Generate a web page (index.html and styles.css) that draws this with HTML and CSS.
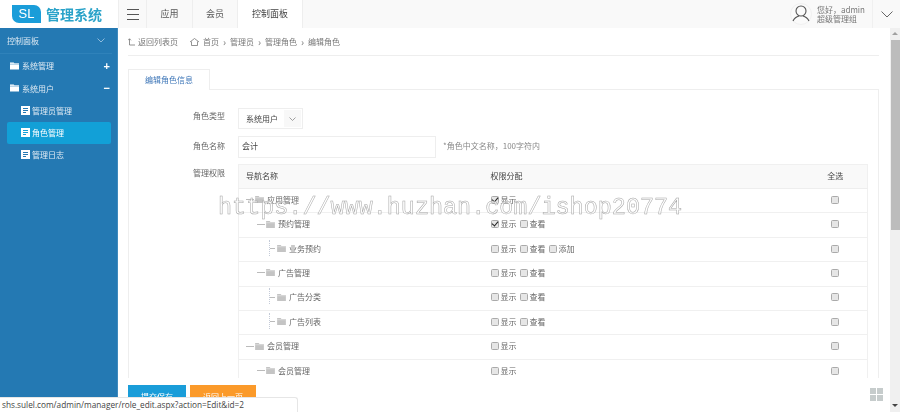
FILE: index.html
```html
<!DOCTYPE html>
<html lang="zh-CN">
<head>
<meta charset="utf-8">
<title>编辑角色</title>
<link rel="stylesheet" href="styles.css">
</head>
<body>
<svg class="defs" width="0" height="0" aria-hidden="true">
  <symbol id="folder" viewBox="0 0 10 8"><path d="M0 0h4l1 1h5v7H0z" fill="#c4c4c4"/><path d="M0 2h10" stroke="#eee" stroke-width=".6"/></symbol>
  <symbol id="wfolder" viewBox="0 0 10 8"><path d="M0 0h4l1 1h5v7H0z" fill="#fff"/><path d="M0 2h10" stroke="#2479b3" stroke-width=".5"/></symbol>
  <symbol id="doc" viewBox="0 0 9 9"><path d="M0 0h9v9H0z" fill="#fff"/><path d="M2 2.500h5M2 4.500h5M2 6.500h3" stroke="currentColor" stroke-width="1"/></symbol>
</svg>
<div class="app">
  <header class="top">
    <div class="logo">
      <span class="logo-badge">SL</span>
      <span class="logo-text">管理系统</span>
    </div>
    <button class="burger" aria-label="菜单"><svg width="12" height="11" viewBox="0 0 12 11"><path d="M0 .5h12M0 5.500h12M0 10.500h12" stroke="#555" stroke-width="1"/></svg></button>
    <nav class="topnav">
      <a class="topnav-item t1">应用</a>
      <a class="topnav-item t2">会员</a>
      <a class="topnav-item t3 is-active">控制面板</a>
    </nav>
    <div class="user">
      <svg class="avatar" width="22" height="22" viewBox="0 0 22 22"><circle cx="11" cy="11" r="10.500" fill="#fafafa" stroke="#f0f0f0"/><circle cx="11" cy="8" r="5" fill="none" stroke="#555" stroke-width="1.100"/><path d="M3 18c1.500-3 4-4.500 6-5M19 18c-1.500-3-4-4.500-6-5" fill="none" stroke="#555" stroke-width="1.100"/></svg>
      <div class="user-text"><div>您好，admin</div><div>超级管理组</div></div>
    </div>
    <div class="user-arrow"><svg width="12" height="7" viewBox="0 0 12 7"><path d="M.5.500 6 6l5.500-5.500" fill="none" stroke="#666" stroke-width="1"/></svg></div>
  </header>
  <aside class="side">
    <div class="side-head"><span>控制面板</span><svg width="8" height="5" viewBox="0 0 8 5"><path d="M.5.500 4 4 7.500.5" fill="none" stroke="#8dbbdc" stroke-width="1"/></svg></div>
    <ul class="side-list">
      <li class="side-row"><svg width="9" height="8"><use href="#wfolder"/></svg><span>系统管理</span><b class="sign">+</b></li>
      <li class="side-row"><svg width="9" height="8"><use href="#wfolder"/></svg><span>系统用户</span><b class="sign">−</b></li>
      <li class="side-sub"><svg width="9" height="9"><use href="#doc"/></svg><span>管理员管理</span></li>
      <li class="side-sub is-active"><svg width="9" height="9"><use href="#doc"/></svg><span>角色管理</span></li>
      <li class="side-sub"><svg width="9" height="9"><use href="#doc"/></svg><span>管理日志</span></li>
    </ul>
  </aside>
  <main class="main">
    <div class="crumbs">
      <svg width="7" height="8" viewBox="0 0 7 8"><path d="M1.500 7V.8M0 2.300 1.500.8 3 2.300M1.500 7H7" fill="none" stroke="#777" stroke-width=".8"/></svg>
      <span class="back">返回列表页</span>
      <svg class="home" width="9" height="8" viewBox="0 0 9 8"><path d="M0 4 4.500.5 9 4M1.500 3.500V7.500h6v-4" fill="none" stroke="#777" stroke-width=".8"/></svg>
      <span>首页</span><i>›</i><span>管理员</span><i>›</i><span>管理角色</span><i>›</i><span>编辑角色</span>
    </div>
    <div class="tabs"><span class="tab">编辑角色信息</span></div>
    <section class="panel">
      <div class="form-row sel-row">
        <label>角色类型</label>
        <div class="select"><span>系统用户</span><em><svg width="7" height="4" viewBox="0 0 7 4"><path d="M.5.500 3.500 3.500 6.500.5" fill="none" stroke="#888" stroke-width=".8"/></svg></em></div>
      </div>
      <div class="form-row name-row">
        <label>角色名称</label>
        <div class="input">会计</div>
        <span class="hint">*角色中文名称，100字符内</span>
      </div>
      <div class="form-row perm-row">
        <label>管理权限</label>
        <table class="perm">
          <colgroup><col class="c1"><col class="c2"><col class="c3"></colgroup>
          <thead><tr><th>导航名称</th><th class="p">权限分配</th><th class="all">全选</th></tr></thead>
          <tbody>
            <tr><td><div class="node l0"><u></u><svg width="9" height="7"><use href="#folder"/></svg>应用管理</div></td><td class="p"><label class="ck on"></label>显示</td><td class="all"><label class="ck"></label></td></tr>
            <tr><td><div class="node l1"><u></u><svg width="9" height="7"><use href="#folder"/></svg>预约管理</div></td><td class="p"><label class="ck on"></label>显示<label class="ck"></label>查看</td><td class="all"><label class="ck"></label></td></tr>
            <tr><td><div class="node l2"><s></s><u></u><svg width="9" height="7"><use href="#folder"/></svg>业务预约</div></td><td class="p"><label class="ck"></label>显示<label class="ck"></label>查看<label class="ck"></label>添加</td><td class="all"><label class="ck"></label></td></tr>
            <tr><td><div class="node l1"><u></u><svg width="9" height="7"><use href="#folder"/></svg>广告管理</div></td><td class="p"><label class="ck"></label>显示<label class="ck"></label>查看</td><td class="all"><label class="ck"></label></td></tr>
            <tr><td><div class="node l2"><s></s><u></u><svg width="9" height="7"><use href="#folder"/></svg>广告分类</div></td><td class="p"><label class="ck"></label>显示<label class="ck"></label>查看</td><td class="all"><label class="ck"></label></td></tr>
            <tr><td><div class="node l2"><s></s><u></u><svg width="9" height="7"><use href="#folder"/></svg>广告列表</div></td><td class="p"><label class="ck"></label>显示<label class="ck"></label>查看</td><td class="all"><label class="ck"></label></td></tr>
            <tr><td><div class="node l0"><u></u><svg width="9" height="7"><use href="#folder"/></svg>会员管理</div></td><td class="p"><label class="ck"></label>显示</td><td class="all"><label class="ck"></label></td></tr>
            <tr><td><div class="node l1"><u></u><svg width="9" height="7"><use href="#folder"/></svg>会员管理</div></td><td class="p"><label class="ck"></label>显示</td><td class="all"><label class="ck"></label></td></tr>
          </tbody>
        </table>
      </div>
    </section>
    <div class="actions">
      <button class="btn blue">提交保存</button>
      <button class="btn orange">返回上一页</button>
    </div>
  </main>
  <div class="scrollbar"><span class="up"></span><span class="thumb"></span><span class="down"></span></div>
</div>
<div class="float-grid"><i></i><i></i><i></i><i></i></div>
<div class="watermark">https://www.huzhan.com/ishop20774</div>
<div class="status">shs.sulel.com/admin/manager/role_edit.aspx?action=Edit&amp;id=2</div>
</body>
</html>
```
FILE: styles.css
```css
* { box-sizing: border-box; }
html, body { margin: 0; height: 100%; overflow: hidden; }
body { font: 8px/1.2 "Noto Sans CJK SC", "Liberation Sans", sans-serif; color: #555; background: #fff; position: relative; }
.defs { position: absolute; }
.app { display: grid; grid-template-columns: 118px 1fr 10px; grid-template-rows: 28px 384px; width: 900px; height: 412px; filter: blur(.3px); }

.top { grid-column: 1 / 4; display: flex; align-items: stretch; background: #f9f9f9; }
.logo { width: 118px; display: flex; align-items: center; padding-left: 12px; background: #fff; }
.logo-badge { width: 29px; height: 18px; background: #1a9dd9; color: #fff; font: 13px/18px "Liberation Sans", sans-serif; text-align: center; border-radius: 0 7px 0 7px; }
.logo-text { margin-left: 5px; font-size: 14px; line-height: 18px; font-weight: 700; color: #2aa3c9; white-space: nowrap; }
.burger { width: 29px; padding: 0; border: 0; border-left: 1px solid #eee; border-right: 1px solid #eee; background: #f9f9f9; display: flex; align-items: center; justify-content: center; }
.topnav { display: flex; }
.topnav-item { display: flex; align-items: center; justify-content: center; font-size: 9px; color: #555; border-right: 1px solid #eee; }
.t1 { width: 46px; } .t2 { width: 45px; } .t3 { width: 65px; }
.is-active.topnav-item { background: #fff; color: #444; }
.user { margin-left: auto; display: flex; align-items: center; gap: 5px; font-size: 8px; line-height: 9px; color: #777; }
.user-text { width: 55px; }
.user-arrow { width: 28px; border-left: 1px solid #f0f0f0; display: flex; align-items: center; padding-left: 8px; }

.side { background: #2479b3; color: #dfeaf3; border-right: 1px solid #3f8abd; }
.side-head { height: 26px; margin-right: 5px; padding: 0 7px; display: flex; align-items: center; justify-content: space-between; border-bottom: 1px solid #2f82ba; color: #dbe8f2; }
.side-list { list-style: none; margin: 0; padding: 0; }
.side-row { height: 22.300px; padding: 0 7px 0 10px; display: flex; align-items: center; gap: 3px; }
.side-row:first-child { margin-top: 1px; }
.sign { margin-left: auto; color: #fff; font: 700 11px/1 "Liberation Sans", sans-serif; }
.side-sub { height: 22px; margin: 0 6px 0 7px; padding-left: 14px; display: flex; align-items: center; gap: 2px; }
.side-sub svg { color: #2479b3; }
.side-sub.is-active { background: #12a0d7; color: #fff; border-radius: 2px; }
.side-sub.is-active svg { color: #12a0d7; }

.main { min-width: 0; padding: 0 11px 0 10px; background: #fff; display: flex; flex-direction: column; }
.crumbs { height: 28px; display: flex; align-items: center; gap: 3px; flex: none; border-bottom: 1px solid #eee; color: #777; }
.crumbs i { font-style: normal; font-size: 10px; line-height: 1; padding: 0 1px; color: #777; }
.crumbs .home { margin-left: 9px; margin-right: 1px; }
.tabs { margin-top: 13px; height: 21px; flex: none; border-bottom: 1px solid #eee; display: flex; }
.tab { width: 82px; height: 21px; border: 1px solid #eee; border-bottom: 0; background: #fff; color: #3f77b8; display: flex; align-items: center; justify-content: center; }

.panel { height: 288px; overflow: hidden; flex: none; padding-top: 18px; border-left: 1px solid #eee; border-right: 1px solid #eee; }
.form-row { display: flex; align-items: flex-start; }
.form-row > label { width: 96px; padding-top: 3px; margin-right: 13px; text-align: right; color: #666; line-height: 10px; }
.sel-row { height: 28px; }
.select { width: 65px; height: 21px; border: 1px solid #eee; display: flex; align-items: center; padding-left: 7px; color: #444; }
.select span { flex: 1; }
.select em { width: 17px; height: 17px; margin-right: 1px; background: #f8f8f8; display: flex; align-items: center; justify-content: center; }
.name-row { height: 28px; }
.name-row > label { padding-top: 5px; }
.input { width: 198px; height: 22px; border: 1px solid #eee; display: flex; align-items: center; padding: 0 0 2px 3px; color: #444; }
.hint { margin-left: 7px; line-height: 19px; color: #888; }
.perm-row > label { padding-top: 4px; }
.perm { width: 630px; table-layout: fixed; border-collapse: collapse; border: 1px solid #f0f0f0; }
.c1 { width: 246px; } .c3 { width: 64px; }
.perm th { height: 24px; padding: 0 7px 2px; background: #f9f9f9; border-bottom: 1px solid #eee; font-weight: 400; text-align: left; color: #444; }
.perm td { height: 24.400px; padding: 0 7px 2px 0; border-bottom: 1px solid #f0f0f0; color: #666; }
.perm .p { padding-left: 6px; }
.perm .all { text-align: center; padding-left: 0; padding-right: 0; }
.node { display: flex; align-items: center; color: #666; position: relative; }
.node svg { margin-right: 3px; }
.node u { display: block; width: 8px; height: 1px; margin-right: 1px; background: #bbb; }
.l0 { padding-left: 7px; }
.l1 { padding-left: 18px; }
.l2 { padding-left: 31px; }
.l2 u { width: 5px; margin-right: 2px; }
.node s { position: absolute; left: 30px; top: -4px; height: 16px; border-left: 1px dotted #c4cbd8; }
.ck { display: inline-block; width: 8px; height: 8px; margin: 0 2px 0 0; vertical-align: -1px; background: #e6e6e6; border: 1px solid #aaa; border-radius: 1.500px; position: relative; }
td.p .ck ~ .ck { margin-left: 3px; }
.all .ck { margin: 0; }
.ck.on::after { content: ""; position: absolute; left: 1px; top: -1px; width: 3px; height: 5px; border: solid #222; border-width: 0 1.500px 1.500px 0; transform: rotate(40deg); }

.actions { display: flex; gap: 4px; margin-top: 7px; flex: none; }
.btn { height: 22px; padding: 0; border: 0; font: 8px "Noto Sans CJK SC", sans-serif; color: #fff; }
.blue { width: 58px; background: #1a9dd9; }
.orange { width: 66px; background: #fb9a2a; }

.scrollbar { background: #f0f0f0; display: flex; flex-direction: column; align-items: center; position: relative; }
.up { height: 12px; width: 100%; flex: none; position: relative; }
.up::after { content: ""; position: absolute; left: 2px; top: 4px; border: 3px solid transparent; border-bottom-color: #a0a0a0; border-top: 0; }
.thumb { width: 9px; height: 190px; background: #bcbcbc; flex: none; }
.down { margin-top: auto; height: 12px; width: 100%; flex: none; position: relative; }
.down::after { content: ""; position: absolute; left: 2px; top: 4px; border: 3px solid transparent; border-top-color: #444; border-bottom: 0; }

.float-grid { position: absolute; left: 870px; top: 388px; width: 14px; height: 14px; display: grid; grid-template-columns: 6px 6px; grid-template-rows: 6px 6px; gap: 1px; }
.float-grid i { background: #c6cccc; }
.watermark { position: absolute; left: 218px; top: 192px; font: 23.450px/32px "Liberation Mono", monospace; color: rgba(255,255,255,.6); -webkit-text-stroke: .5px #a4a4a4; white-space: nowrap; filter: grayscale(1) blur(.2px); }
.status { position: absolute; left: 0; top: 397px; width: 298px; height: 15px; padding: 1px 0 0 2px; background: #fff; border: 1px solid #e6e6e6; border-left: 0; border-bottom: 0; border-radius: 0 3px 0 0; font: 8.250px/12px "Open Sans", sans-serif; color: #444; white-space: nowrap; }
```
